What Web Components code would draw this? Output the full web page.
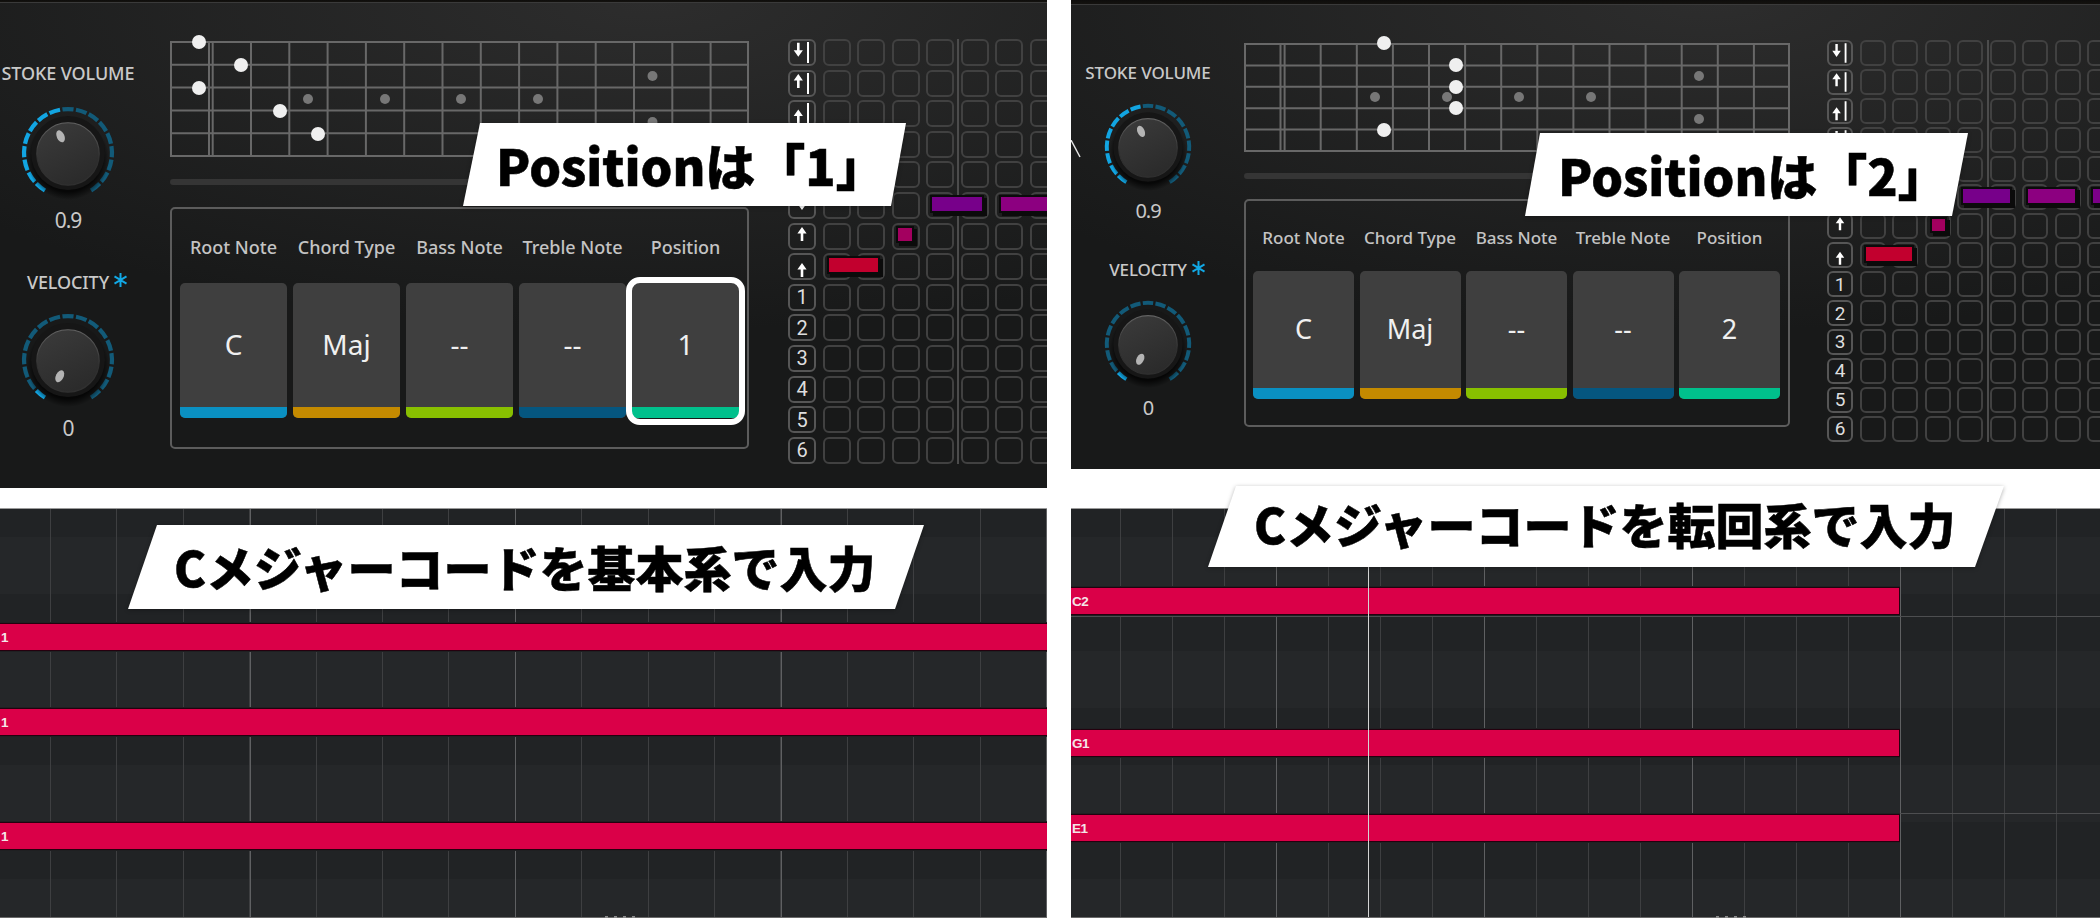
<!DOCTYPE html>
<html lang="ja">
<head>
<meta charset="utf-8">
<title>Position</title>
<style>
    body { margin: 0; background: #fff; }
</style>
</head>
<body>
<shot-page>
    <shot-column gap="20">
        <synth-panel style="height:488px;--strip:2px;--label:18px;--value:21px">
            <knob-column style="width:136px" space="40">
                <knob-dial label="STOKE VOLUME" value="0.9" lit="8" angle="-24" size="96" label-gap="21.7" value-gap="7.5"></knob-dial>
                <knob-dial label="VELOCITY" star value="0" lit="1" angle="-153" size="96" label-gap="20" value-gap="8"></knob-dial>
            </knob-column>
            <synth-center style="width:579px;margin-left:34px;--top:41px;--slider-gap:22px;--panel-gap:22px">
                <fret-board slot="fret" width="579" height="116" nut="39" start="42.7" cell="38.3"
                    white="29,1 71,24 29,47 110,70 148,93"
                    grey="138,58 215,58 291,58 368,58 482.5,35 482.5,81"></fret-board>
                <chord-panel slot="chord" style="--slot-w:107px;--slot-h:135px;--slot-gap:6px;--pad-x:8px;--pad-y:26px;--head-gap:24px;--pad-b:29px;--head:18px;--big:28px">
                    <chord-slot label="Root Note" value="C" color="#0a90c2"></chord-slot>
                    <chord-slot label="Chord Type" value="Maj" color="#c48a00"></chord-slot>
                    <chord-slot label="Bass Note" value="--" color="#88c000"></chord-slot>
                    <chord-slot label="Treble Note" value="--" color="#05567f"></chord-slot>
                    <chord-slot label="Position" value="1" color="#00c08c" selected></chord-slot>
                </chord-panel>
            </synth-center>
            <pad-grid cols="7" line="169" style="margin-left:39px;--top:39px;--pad-w:28px;--pad-h:27px;--gx:6.5px;--gy:3.6px;--num:20px">
                <pad-note style="left:41px;top:219px;width:49px;height:14px;background:#c2002e"></pad-note>
                <pad-note style="left:110px;top:189px;width:14px;height:13px;background:#a3005f"></pad-note>
                <pad-note style="left:144px;top:158px;width:50px;height:14px;background:#77008a"></pad-note>
                <pad-note style="left:213px;top:158px;width:60px;height:14px;background:#8c0080"></pad-note>
            </pad-grid>
            <call-out style="left:463px;top:123px;width:443px;height:83px;--tl:17px;--br:15px;--pad:33px;--size:50px;--up:2px">Positionは「1」</call-out>
        </synth-panel>
        <piano-roll style="height:410px" first="50" pitch="66.4" bright-first="249.5" bright-pitch="265.6" ticks="605">
            <roll-note style="top:115px;width:1047px">1</roll-note>
            <roll-note style="top:200px;width:1047px">1</roll-note>
            <roll-note style="top:314px;width:1047px">1</roll-note>
            <call-out style="left:128px;top:16px;width:796px;height:84px;--tl:29px;--br:29px;--pad:46px;--size:48px;--up:3px">Cメジャーコードを基本系で入力</call-out>
        </piano-roll>
    </shot-column>
    <shot-column gap="39">
        <synth-panel style="height:469px;--strip:4px;--label:17px;--value:20px">
            <knob-column style="width:154px" space="37">
                <knob-dial label="STOKE VOLUME" value="0.9" lit="8" angle="-24" size="90" label-gap="19" value-gap="7"></knob-dial>
                <knob-dial label="VELOCITY" star value="0" lit="1" angle="-153" size="90" label-gap="19" value-gap="7"></knob-dial>
            </knob-column>
            <synth-center style="width:546px;margin-left:19px;--top:43px;--slider-gap:21px;--panel-gap:20px">
                <fret-board slot="fret" width="546" height="109" nut="36.5" start="40.6" cell="36.1"
                    white="140,0 212,22 212,44 212,65 140,87"
                    grey="131,54 203,54 275,54 347,54 455,33 455,76"></fret-board>
                <chord-panel slot="chord" style="--slot-w:101px;--slot-h:128px;--slot-gap:5.5px;--pad-x:7px;--pad-y:25px;--head-gap:21px;--pad-b:26px;--head:17px;--big:27px">
                    <chord-slot label="Root Note" value="C" color="#0a90c2"></chord-slot>
                    <chord-slot label="Chord Type" value="Maj" color="#c48a00"></chord-slot>
                    <chord-slot label="Bass Note" value="--" color="#88c000"></chord-slot>
                    <chord-slot label="Treble Note" value="--" color="#05567f"></chord-slot>
                    <chord-slot label="Position" value="2" color="#00c08c"></chord-slot>
                </chord-panel>
            </synth-center>
            <pad-grid cols="8" line="160" style="margin-left:37px;--top:40px;--pad-w:26px;--pad-h:26px;--gx:6.5px;--gy:2.9px;--num:19px">
                <pad-note style="left:39px;top:207px;width:46px;height:14px;background:#c2002e"></pad-note>
                <pad-note style="left:105px;top:179px;width:13px;height:12px;background:#a3005f"></pad-note>
                <pad-note style="left:136px;top:149px;width:47px;height:14px;background:#77008a"></pad-note>
                <pad-note style="left:201px;top:149px;width:47px;height:14px;background:#8c0080"></pad-note>
                <pad-note style="left:266px;top:149px;width:47px;height:14px;background:#7b0088"></pad-note>
            </pad-grid>
            <tick-mark></tick-mark>
            <call-out style="left:454px;top:133px;width:443px;height:83px;--tl:15px;--br:16px;--pad:33px;--size:50px;--up:2px">Positionは「2」</call-out>
        </synth-panel>
        <piano-roll style="height:410px" first="49" pitch="52" bright-first="205" bright-pitch="208" lines="107,304" playhead="297" ticks="645">
            <roll-note style="top:79px;width:829px;border-right:1px solid #25000e">C2</roll-note>
            <roll-note style="top:221px;width:829px;border-right:1px solid #25000e">G1</roll-note>
            <roll-note style="top:306px;width:829px;border-right:1px solid #25000e">E1</roll-note>
            <call-out style="left:137px;top:-23px;width:796px;height:81px;--tl:28px;--br:29px;--pad:46px;--size:48px;--up:7px">Cメジャーコードを転回系で入力</call-out>
        </piano-roll>
    </shot-column>
</shot-page>
<script>
"use strict"

const uiFont = `"Noto Sans", Roboto, "Liberation Sans", sans-serif`

class ShotPage extends HTMLElement {
    constructor() {
        super()
        const template = document.createElement("template")
        template.innerHTML = `
            <style>
                :host {
                    display: grid;
                    grid-template-columns: 1047px 1029px;
                    column-gap: 24px;
                    width: 2100px;
                }
            </style>
            <slot></slot>
        `
        this.attachShadow({ mode: "open" }).append(template.content.cloneNode(true))
    }
}

class ShotColumn extends HTMLElement {
    constructor() {
        super()
        const template = document.createElement("template")
        template.innerHTML = `
            <style>
                :host {
                    display: flex;
                    flex-direction: column;
                    min-width: 0;
                }
            </style>
            <slot></slot>
        `
        this.attachShadow({ mode: "open" }).append(template.content.cloneNode(true))
    }
    connectedCallback() {
        this.style.gap = `${this.getAttribute("gap")}px`
    }
}

class SynthPanel extends HTMLElement {
    constructor() {
        super()
        const template = document.createElement("template")
        template.innerHTML = `
            <style>
                :host {
                    display: flex;
                    align-items: flex-start;
                    position: relative;
                    overflow: hidden;
                    font-family: ${uiFont};
                    background:
                        linear-gradient(180deg, #0e0d0c 0, #14120f var(--strip), #3a3a3a var(--strip), #3a3a3a calc(var(--strip) + 1px), transparent calc(var(--strip) + 1px)),
                        radial-gradient(ellipse 900px 330px at 62% 0, #2d2d2d 0, rgba(45,45,45,0) 100%),
                        #181919;
                }
            </style>
            <slot></slot>
        `
        this.attachShadow({ mode: "open" }).append(template.content.cloneNode(true))
    }
}

class KnobColumn extends HTMLElement {
    constructor() {
        super()
        const template = document.createElement("template")
        template.innerHTML = `
            <style>
                :host {
                    display: flex;
                    flex: none;
                    flex-direction: column;
                    align-items: center;
                    padding-top: 63px;
                }
            </style>
            <slot></slot>
        `
        this.attachShadow({ mode: "open" }).append(template.content.cloneNode(true))
    }
    connectedCallback() {
        this.style.gap = `${this.getAttribute("space")}px`
    }
}

class KnobDial extends HTMLElement {
    constructor() {
        super()
        this.attachShadow({ mode: "open" })
    }
    connectedCallback() {
        const lit = Number(this.getAttribute("lit"))
        const angle = this.getAttribute("angle")
        const size = this.getAttribute("size")
        const star = this.hasAttribute("star") ? `
            <svg class="star" viewBox="0 0 14 14" width="15" height="14">
                <path d="M7 0V14M1 3.4L13 10.6M13 3.4L1 10.6" stroke="#12a9e6" stroke-width="2" fill="none"/>
            </svg>` : ""
        let ring = ""
        const total = 17
        const sweep = 300 / total
        const id = `k${Math.random().toString(36).slice(2, 7)}`
        for (let i = 0; i < total; i++) {
            const a0 = (-150 + i * sweep + 1.6) * Math.PI / 180
            const a1 = (-150 + (i + 1) * sweep - 1.6) * Math.PI / 180
            const r = 45.8
            const d = `M${(r * Math.sin(a0)).toFixed(2)} ${(-r * Math.cos(a0)).toFixed(2)}A${r} ${r} 0 0 1 ${(r * Math.sin(a1)).toFixed(2)} ${(-r * Math.cos(a1)).toFixed(2)}`
            ring += `<path d="${d}" fill="none" stroke-width="4.4" stroke="${i < lit ? "#12a5e2" : "#125a78"}"/>`
        }
        this.shadowRoot.innerHTML = `
            <style>
                :host {
                    display: flex;
                    flex-direction: column;
                    align-items: center;
                    color: #c9c9c9;
                }
                .label {
                    position: relative;
                    height: 20px;
                    line-height: 20px;
                    font-size: var(--label);
                    font-weight: 500;
                    letter-spacing: -0.1px;
                    white-space: nowrap;
                }
                .star {
                    position: absolute;
                    left: calc(100% + 4px);
                    top: 1px;
                }
                svg.dial {
                    display: block;
                    overflow: visible;
                    margin-top: ${this.getAttribute("label-gap")}px;
                }
                .value {
                    height: 24px;
                    line-height: 24px;
                    font-size: var(--value);
                    letter-spacing: -1px;
                    margin-top: ${this.getAttribute("value-gap")}px;
                }
            </style>
            <div class="label">${this.getAttribute("label")}${star}</div>
            <svg class="dial" viewBox="-50 -50 100 100" width="${size}" height="${size}">
                <defs>
                    <linearGradient id="${id}c" x1="0.2" y1="0" x2="0.7" y2="1">
                        <stop offset="0" stop-color="#3a3a3a"/>
                        <stop offset="1" stop-color="#2a2a2a"/>
                    </linearGradient>
                    <linearGradient id="${id}r" x1="0" y1="0" x2="0" y2="1">
                        <stop offset="0" stop-color="#626262"/>
                        <stop offset="0.6" stop-color="#303030"/>
                    </linearGradient>
                    <radialGradient id="${id}s">
                        <stop offset="0.8" stop-color="#000" stop-opacity="0.75"/>
                        <stop offset="1" stop-color="#000" stop-opacity="0"/>
                    </radialGradient>
                </defs>
                ${ring}
                <circle cx="0" cy="6" r="43" fill="url(#${id}s)"/>
                <circle r="38.5" fill="#161616"/>
                <circle cy="1" r="32.5" fill="url(#${id}c)" stroke="url(#${id}r)" stroke-width="1.2"/>
                <ellipse transform="rotate(${angle}) translate(0 -19)" rx="4" ry="6.6" fill="#b4b4b4"/>
            </svg>
            <div class="value">${this.getAttribute("value")}</div>
        `
    }
}

class SynthCenter extends HTMLElement {
    constructor() {
        super()
        const template = document.createElement("template")
        template.innerHTML = `
            <style>
                :host {
                    display: flex;
                    flex: none;
                    flex-direction: column;
                    padding-top: var(--top);
                }
                .slider {
                    height: 6px;
                    margin: var(--slider-gap) 0 var(--panel-gap);
                    border-radius: 3px;
                    background: #353535;
                }
            </style>
            <slot name="fret"></slot>
            <div class="slider"></div>
            <slot name="chord"></slot>
        `
        this.attachShadow({ mode: "open" }).append(template.content.cloneNode(true))
    }
}

class FretBoard extends HTMLElement {
    constructor() {
        super()
        this.attachShadow({ mode: "open" })
    }
    connectedCallback() {
        const w = Number(this.getAttribute("width"))
        const h = Number(this.getAttribute("height"))
        const nut = Number(this.getAttribute("nut"))
        const start = Number(this.getAttribute("start"))
        const cell = Number(this.getAttribute("cell"))
        const xs = [1, nut, start]
        for (let x = start + cell; x < w + 1; x += cell) {
            xs.push(x)
        }
        xs[xs.length - 1] = w - 1
        let lines = ""
        for (const x of xs) {
            lines += `<line x1="${x}" x2="${x}" y1="1" y2="${h - 1}"/>`
        }
        for (let i = 0; i <= 5; i++) {
            const y = 1 + i * (h - 2) / 5
            lines += `<line x1="0" x2="${w}" y1="${y}" y2="${y}"/>`
        }
        const dots = (attr, r, fill) => this.getAttribute(attr).split(" ").map(p => {
            const [x, y] = p.split(",")
            return `<circle cx="${x}" cy="${y}" r="${r}" fill="${fill}"/>`
        }).join("")
        this.shadowRoot.innerHTML = `
            <style>
                :host { display: block; height: ${h}px; }
                svg { display: block; overflow: visible; }
                line { stroke: #686868; stroke-width: 2; }
            </style>
            <svg width="${w}" height="${h}" viewBox="0 0 ${w} ${h}">
                ${lines}
                ${dots("grey", 5, "#777")}
                ${dots("white", 7, "#efefef")}
            </svg>
        `
    }
}

class ChordPanel extends HTMLElement {
    constructor() {
        super()
        const template = document.createElement("template")
        template.innerHTML = `
            <style>
                :host {
                    display: flex;
                    gap: var(--slot-gap);
                    padding: var(--pad-y) var(--pad-x) var(--pad-b);
                    border: 2px solid #5c5c5c;
                    border-radius: 5px;
                }
            </style>
            <slot></slot>
        `
        this.attachShadow({ mode: "open" }).append(template.content.cloneNode(true))
    }
}

class ChordSlot extends HTMLElement {
    constructor() {
        super()
        this.attachShadow({ mode: "open" })
    }
    connectedCallback() {
        this.shadowRoot.innerHTML = `
            <style>
                :host {
                    display: flex;
                    flex-direction: column;
                    align-items: center;
                    width: var(--slot-w);
                }
                .head {
                    height: 24px;
                    line-height: 24px;
                    font-size: var(--head);
                    font-weight: 500;
                    color: #c4c4c4;
                    white-space: nowrap;
                    margin-bottom: var(--head-gap);
                }
                .btn {
                    position: relative;
                    display: flex;
                    flex-direction: column;
                    width: 100%;
                    height: var(--slot-h);
                    border-radius: 5px;
                    overflow: hidden;
                    background: #3f3f3f;
                }
                .big {
                    flex: 1;
                    display: flex;
                    align-items: center;
                    justify-content: center;
                    padding-bottom: 2px;
                    font-size: var(--big);
                    color: #f0f0f0;
                }
                .bar {
                    flex: none;
                    height: 11px;
                    background: ${this.getAttribute("color")};
                }
                .ring {
                    display: ${this.hasAttribute("selected") ? "block" : "none"};
                    position: absolute;
                    left: -6px;
                    right: -6px;
                    bottom: -7px;
                    height: calc(var(--slot-h) + 13px);
                    border: 6px solid #fff;
                    border-radius: 14px;
                    box-sizing: border-box;
                }
                .wrap { position: relative; width: 100%; }
            </style>
            <div class="head">${this.getAttribute("label")}</div>
            <div class="wrap">
                <div class="btn">
                    <div class="big">${this.getAttribute("value")}</div>
                    <div class="bar"></div>
                </div>
                <div class="ring"></div>
            </div>
        `
    }
}

const arrowUp = (cx, y) => `<path d="M${cx} ${y}L${cx + 4.6} ${y + 6.5}H${cx + 1.3}V${y + 14}H${cx - 1.3}V${y + 6.5}H${cx - 4.6}Z" fill="#fff"/>`
const arrowDown = (cx, y) => `<path d="M${cx} ${y + 14}L${cx + 4.6} ${y + 7.5}H${cx + 1.3}V${y}H${cx - 1.3}V${y + 7.5}H${cx - 4.6}Z" fill="#fff"/>`
const stopBar = `<rect x="19" y="3" width="2" height="21" fill="#fff"/>`
const padGlyph = {
    dbar: arrowDown(10.3, 3.7) + stopBar,
    ubar: arrowUp(10.3, 4) + stopBar,
    ubarLow: arrowUp(10.3, 9.5) + stopBar,
    up: arrowUp(14, 4),
    upLow: arrowUp(14, 10),
    down: arrowDown(14, 4)
}
const padHeads = ["dbar", "ubar", "ubarLow", "dbar", "ubar", "down", "up", "upLow", "1", "2", "3", "4", "5", "6"]

class PadGrid extends HTMLElement {
    constructor() {
        super()
        this.attachShadow({ mode: "open" })
    }
    connectedCallback() {
        const cols = Number(this.getAttribute("cols"))
        let cells = ""
        for (const head of padHeads) {
            const glyph = padGlyph[head]
            cells += glyph
                ? `<div class="pad head"><svg viewBox="0 0 28 27">${glyph}</svg></div>`
                : `<div class="pad head">${head}</div>`
            for (let i = 0; i < cols; i++) {
                cells += `<div class="pad"></div>`
            }
        }
        this.shadowRoot.innerHTML = `
            <style>
                :host {
                    display: block;
                    flex: none;
                    margin-top: var(--top);
                    position: relative;
                }
                .grid {
                    display: grid;
                    grid-template-columns: repeat(${cols + 1}, var(--pad-w));
                    grid-auto-rows: var(--pad-h);
                    gap: var(--gy) var(--gx);
                }
                .pad {
                    box-sizing: border-box;
                    border: 2px solid #414141;
                    border-radius: 6px;
                }
                .head {
                    display: flex;
                    align-items: center;
                    justify-content: center;
                    border-color: #565656;
                    color: #dedede;
                    font-family: Roboto, sans-serif;
                    font-size: var(--num);
                }
                .head svg {
                    display: block;
                    flex: none;
                    width: var(--pad-w);
                    height: var(--pad-h);
                }
                .line {
                    position: absolute;
                    top: 0;
                    bottom: 0;
                    left: ${this.getAttribute("line")}px;
                    width: 2px;
                    background: #4c4c4c;
                }
            </style>
            <div class="grid">${cells}</div>
            <div class="line"></div>
            <slot></slot>
        `
    }
}

class PadNote extends HTMLElement {
    constructor() {
        super()
        const template = document.createElement("template")
        template.innerHTML = `
            <style>
                :host {
                    display: block;
                    position: absolute;
                    box-shadow: 0 0 0 2px #0b0b0b, 3px 3px 0 2px #0b0b0b;
                }
            </style>
        `
        this.attachShadow({ mode: "open" }).append(template.content.cloneNode(true))
    }
}

class TickMark extends HTMLElement {
    constructor() {
        super()
        const template = document.createElement("template")
        template.innerHTML = `
            <style>
                :host {
                    display: block;
                    position: absolute;
                    left: 0;
                    top: 140px;
                    width: 10px;
                    height: 18px;
                }
                svg { display: block; }
            </style>
            <svg viewBox="0 0 10 18" width="10" height="18">
                <path d="M0 0L9 17" stroke="#e8e8e8" stroke-width="1.4" fill="none"/>
            </svg>
        `
        this.attachShadow({ mode: "open" }).append(template.content.cloneNode(true))
    }
}

class CallOut extends HTMLElement {
    constructor() {
        super()
        const template = document.createElement("template")
        template.innerHTML = `
            <style>
                :host {
                    display: block;
                    position: absolute;
                    z-index: 5;
                    filter: drop-shadow(0 1px 2px rgba(0,0,0,.3));
                }
                .shape {
                    display: flex;
                    align-items: center;
                    box-sizing: border-box;
                    width: 100%;
                    height: 100%;
                    padding-left: var(--pad);
                    padding-bottom: var(--up);
                    clip-path: polygon(var(--tl) 0, 100% 0, calc(100% - var(--br)) 100%, 0 100%);
                    background: #fff;
                    color: #000;
                    font-family: "Noto Sans CJK JP", "Noto Sans", sans-serif;
                    font-size: var(--size);
                    font-weight: 900;
                    -webkit-text-stroke: 0.5px #000;
                    white-space: nowrap;
                    line-height: 1;
                }
            </style>
            <div class="shape"><slot></slot></div>
        `
        this.attachShadow({ mode: "open" }).append(template.content.cloneNode(true))
    }
}

// one period of the line, so that a fractional pitch stays true across the roll
const lineStops = (first, pitch, color) => {
    const at = first % pitch
    return `repeating-linear-gradient(90deg, transparent ${at + 1 - pitch}px, transparent ${at}px, ${color} ${at}px, ${color} ${at + 1}px)`
}

class PianoRoll extends HTMLElement {
    constructor() {
        super()
        this.attachShadow({ mode: "open" })
    }
    connectedCallback() {
        const first = Number(this.getAttribute("first"))
        const pitch = Number(this.getAttribute("pitch"))
        const brightFirst = Number(this.getAttribute("bright-first"))
        const brightPitch = Number(this.getAttribute("bright-pitch"))
        const lines = (this.getAttribute("lines") || "").split(",").filter(Boolean)
            .map(y => `<div class="hline" style="top:${y}px"></div>`).join("")
        const playhead = this.getAttribute("playhead")
        this.shadowRoot.innerHTML = `
            <style>
                :host {
                    display: block;
                    position: relative;
                    box-sizing: border-box;
                    border-top: 1px solid #9a9a9a;
                    border-bottom: 1px solid #6a6a6a;
                    background-color: #232527;
                    background-image:
                        ${lineStops(brightFirst, brightPitch, "#5f6062")},
                        ${lineStops(first, pitch, "#3e3f41")},
                        repeating-linear-gradient(180deg, #212325 0 28px, #252729 28px 85px, #212325 85px 114px);
                    font-family: "Liberation Sans", sans-serif;
                }
                .hline {
                    position: absolute;
                    left: 0;
                    right: 0;
                    height: 1px;
                    background: #4d4e50;
                }
                .playhead {
                    position: absolute;
                    top: 0;
                    bottom: 0;
                    left: ${playhead}px;
                    width: 1px;
                    z-index: 2;
                    background: #d4d4d4;
                    display: ${playhead ? "block" : "none"};
                }
                .ticks {
                    position: absolute;
                    bottom: -1px;
                    left: ${this.getAttribute("ticks")}px;
                    width: 30px;
                    height: 2px;
                    background: repeating-linear-gradient(90deg, #8a8a8a 0 3px, transparent 3px 9px);
                }
            </style>
            ${lines}
            <slot></slot>
            <div class="ticks"></div>
            <div class="playhead"></div>
        `
    }
}

class RollNote extends HTMLElement {
    constructor() {
        super()
        const template = document.createElement("template")
        template.innerHTML = `
            <style>
                :host {
                    display: flex;
                    align-items: center;
                    position: absolute;
                    left: 0;
                    height: 26px;
                    box-sizing: border-box;
                    padding-left: 1px;
                    background: #da0048;
                    box-shadow: 0 -1px 0 #25000e, 0 1px 0 #25000e, 0 -2px 0 #1f2022, 0 2px 0 #1f2022;
                    color: #f4e4e8;
                    font-size: 13.5px;
                    font-weight: 700;
                    letter-spacing: -0.4px;
                }
            </style>
            <slot></slot>
        `
        this.attachShadow({ mode: "open" }).append(template.content.cloneNode(true))
    }
}

customElements.define("shot-page", ShotPage)
customElements.define("shot-column", ShotColumn)
customElements.define("knob-column", KnobColumn)
customElements.define("knob-dial", KnobDial)
customElements.define("fret-board", FretBoard)
customElements.define("chord-slot", ChordSlot)
customElements.define("chord-panel", ChordPanel)
customElements.define("synth-center", SynthCenter)
customElements.define("pad-note", PadNote)
customElements.define("pad-grid", PadGrid)
customElements.define("tick-mark", TickMark)
customElements.define("synth-panel", SynthPanel)
customElements.define("call-out", CallOut)
customElements.define("roll-note", RollNote)
customElements.define("piano-roll", PianoRoll)
</script>
</body>
</html>
